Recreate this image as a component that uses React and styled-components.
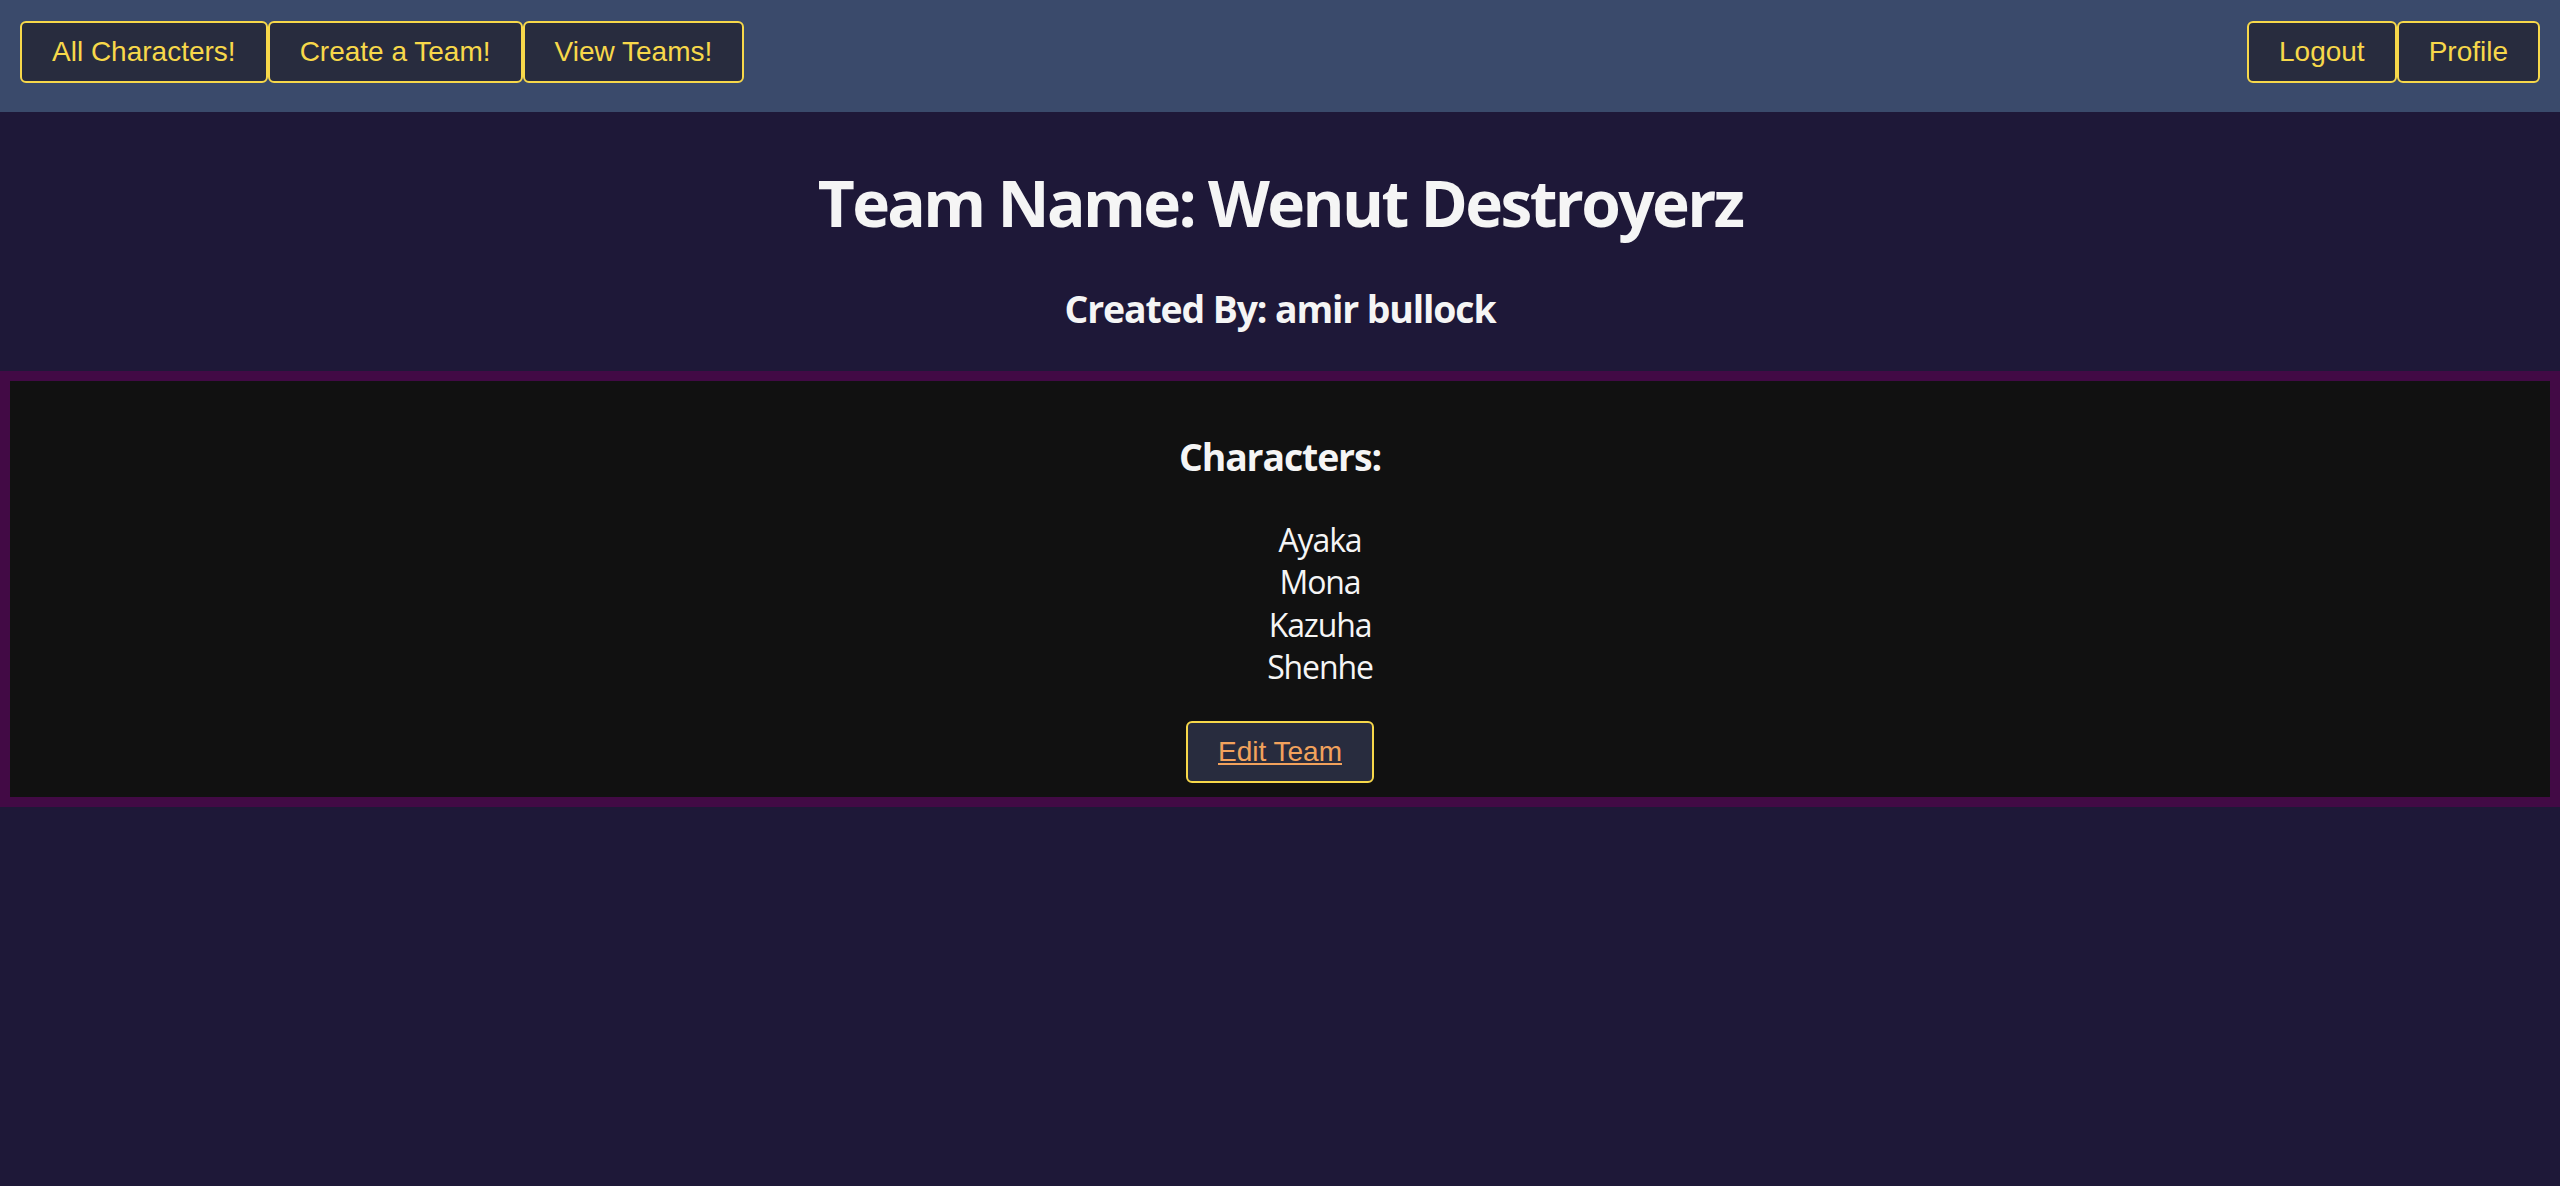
import React from "react";
import styled, { createGlobalStyle } from "styled-components";

const GlobalStyle = createGlobalStyle`
  html, body {
    margin: 0;
    padding: 0;
  }
  body {
    background-color: #1e1838;
    color: #f5f5f5;
    font-family: "Open Sans", "Noto Sans", sans-serif;
    font-size: 32px;
    line-height: 1.33;
    letter-spacing: -0.035em;
    min-height: 1186px;
  }
`;

const NavBar = styled.nav`
  display: flex;
  justify-content: space-between;
  align-items: flex-start;
  background-color: #3a4a6b;
  padding: 21px 20px 29px;
`;

const NavGroup = styled.div`
  display: flex;
`;

const NavButton = styled.button`
  font-family: "Liberation Sans", Arial, sans-serif;
  font-size: 28px;
  line-height: 32px;
  letter-spacing: 0;
  color: #f7d84a;
  background-color: #282c3e;
  border: 2px solid #f7d84a;
  border-radius: 6px;
  padding: 13px 30px;
  cursor: pointer;
`;

const Header = styled.header`
  text-align: center;
`;

const TeamTitle = styled.h1`
  font-size: 64px;
  font-weight: 700;
  letter-spacing: -0.041em;
  margin: 48px 0 39px;
`;

const SubTitle = styled.h3`
  font-size: 37.4px;
  font-weight: 700;
  margin: 0 0 37px;
`;

const Panel = styled.section`
  border: 10px solid #420a45;
  background-color: #111111;
  padding: 14px 0;
  text-align: center;
`;

const PanelHeading = styled.h3`
  font-size: 37.4px;
  font-weight: 700;
  margin: 37px 0;
`;

const CharacterList = styled.ul`
  list-style: none;
  margin: 0 0 32px;
  padding: 0 0 0 80px;
`;

const CharacterItem = styled.li`
  font-size: 32px;
  line-height: 42.6px;
`;

const EditButton = styled(NavButton)`
  display: inline-block;
  color: #f2a25c;
  text-decoration: underline;
`;

const team = {
  name: "Wenut Destroyerz",
  creator: "amir bullock",
  characters: ["Ayaka", "Mona", "Kazuha", "Shenhe"],
};

export default function App() {
  return (
    <>
      <GlobalStyle />
      <NavBar>
        <NavGroup>
          <NavButton>All Characters!</NavButton>
          <NavButton>Create a Team!</NavButton>
          <NavButton>View Teams!</NavButton>
        </NavGroup>
        <NavGroup>
          <NavButton>Logout</NavButton>
          <NavButton>Profile</NavButton>
        </NavGroup>
      </NavBar>
      <Header>
        <TeamTitle>Team Name: {team.name}</TeamTitle>
        <SubTitle>Created By: {team.creator}</SubTitle>
      </Header>
      <Panel>
        <PanelHeading>Characters:</PanelHeading>
        <CharacterList>
          {team.characters.map((c) => (
            <CharacterItem key={c}>{c}</CharacterItem>
          ))}
        </CharacterList>
        <EditButton as="a" href="#">
          Edit Team
        </EditButton>
      </Panel>
    </>
  );
}
